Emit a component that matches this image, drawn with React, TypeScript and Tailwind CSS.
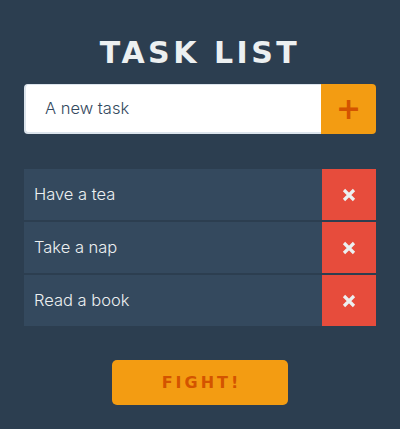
const tasks = ['Have a tea', 'Take a nap', 'Read a book'];

export default function App() {
  return (
    <div className="min-h-[429px] bg-[#2c3e50] px-6 pt-[34px] font-['DejaVu_Sans',sans-serif]">
      <h1 className="text-center text-[30px] font-bold leading-[38px] tracking-[3.5px] text-[#ecf0f1]">
        TASK LIST
      </h1>

      <div className="mt-[12px] flex h-[50px]">
        <div className="flex flex-1 items-center rounded-l-[4px] border-b-2 border-l-2 border-t border-[#dce4ec] bg-white pl-[19px] font-['Inter',sans-serif] text-[16.5px] font-light text-[#34495e]">
          A new task
        </div>
        <button className="flex w-[55px] items-center justify-center rounded-r-[4px] bg-[#f39c12] text-[30px] font-bold leading-none text-[#d35400]">
          +
        </button>
      </div>

      <ul className="mt-[35px] flex flex-col gap-[2px]">
        {tasks.map((task) => (
          <li key={task} className="flex h-[51px] bg-[#34495e]">
            <span className="flex flex-1 items-center pb-[1px] pl-[10px] font-['Inter',sans-serif] text-[16.5px] font-light text-[#ecf0f1]">
              {task}
            </span>
            <button className="flex w-[54px] items-center justify-center bg-[#e74c3c]">
              <svg width="14" height="14" viewBox="0 0 14 14">
                <path d="M2 2 L12 12 M12 2 L2 12" stroke="#ecf0f1" strokeWidth="3.2" />
              </svg>
            </button>
          </li>
        ))}
      </ul>

      <div className="mt-[34px] flex justify-center">
        <button className="h-[45px] w-[176px] rounded-[5px] bg-[#f39c12] pl-[3px] text-[16px] font-bold tracking-[3px] text-[#d35400]">
          FIGHT!
        </button>
      </div>
    </div>
  );
}
